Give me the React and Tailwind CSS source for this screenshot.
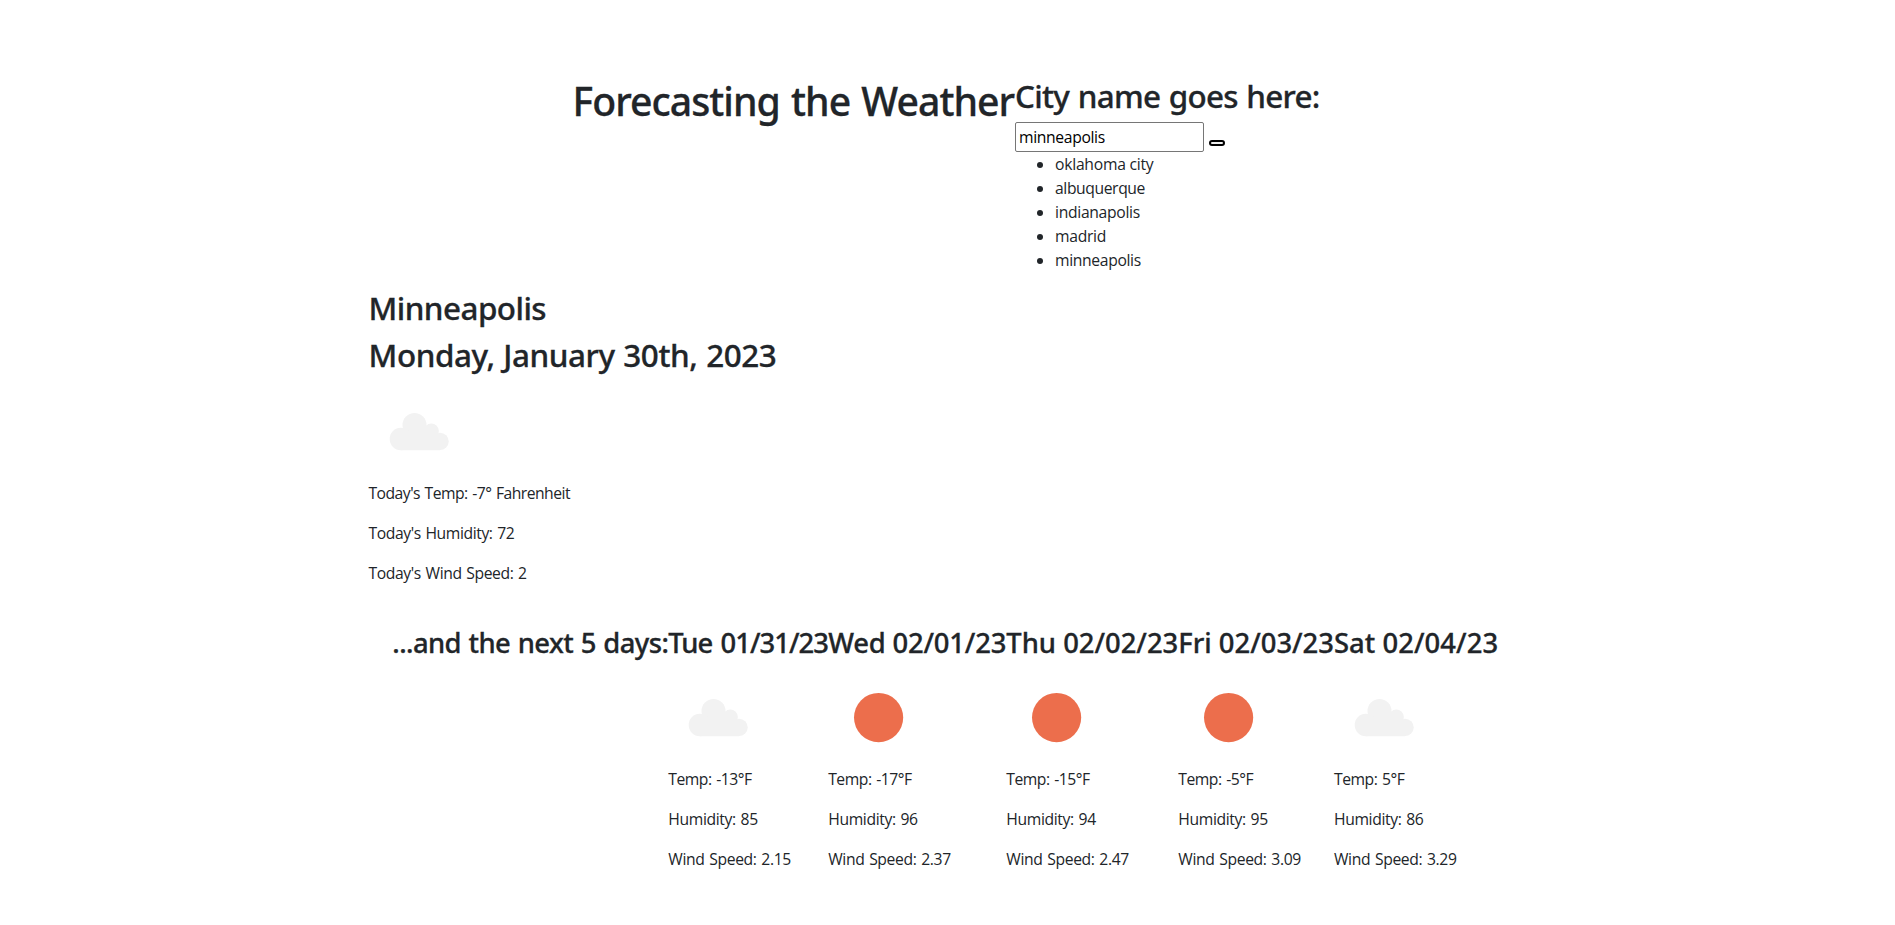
const heading = "font-['Noto_Sans',sans-serif] font-medium whitespace-nowrap [-webkit-text-stroke:0.3px_#212529]";

function Cloud() {
  return (
    <svg className="block size-[100px]" viewBox="0 0 100 100" fill="#f2f2f2">
      <circle cx="45.5" cy="44" r="12" />
      <circle cx="31.9" cy="58" r="11.2" />
      <circle cx="62.3" cy="50" r="7.6" />
      <circle cx="71" cy="60.4" r="8.7" />
      <path d="M31.9 50h30l9 10v9.2h-39z" />
    </svg>
  );
}

function Sun() {
  return (
    <svg className="block size-[100px]" viewBox="0 0 100 100">
      <circle cx="50.6" cy="50.6" r="24.6" fill="#ec6e4c" />
    </svg>
  );
}

const cities = [
  { name: "oklahoma city", className: "tracking-[-0.25px]" },
  { name: "albuquerque", className: "tracking-[-0.4px]" },
  { name: "indianapolis", className: "tracking-[-0.31px]" },
  { name: "madrid", className: "tracking-[-0.3px]" },
  { name: "minneapolis", className: "tracking-[-0.35px]" },
];

const days = [
  { date: "Tue 01/31/23", Icon: Cloud, temp: "-13", humidity: 85, wind: "2.15", width: "w-[159.9px]", tracking: "tracking-[-0.95px] [word-spacing:2px]" },
  { date: "Wed 02/01/23", Icon: Sun, temp: "-17", humidity: 96, wind: "2.37", width: "w-[178.1px]", tracking: "tracking-[-0.18px]" },
  { date: "Thu 02/02/23", Icon: Sun, temp: "-15", humidity: 94, wind: "2.47", width: "w-[172px]", tracking: "tracking-normal" },
  { date: "Fri 02/03/23", Icon: Sun, temp: "-5", humidity: 95, wind: "3.09", width: "w-[155.7px]", tracking: "tracking-normal" },
  { date: "Sat 02/04/23", Icon: Cloud, temp: "5", humidity: 86, wind: "3.29", width: "w-[164px]", tracking: "tracking-[0.06px]" },
];

export default function App() {
  return (
    <div className="min-h-[925px] bg-white pt-[76px] font-['Open_Sans',sans-serif] text-[15.7px] leading-6 text-[#212529]">
      <header className="flex pl-[572.5px]">
        <h1 className={`${heading} h-12 w-[442.5px] text-[39.2px] leading-[50px] tracking-[-0.98px] [word-spacing:2px]`}>Forecasting the Weather</h1>
        <div>
          <h2 className={`${heading} mb-2 h-[38.4px] text-[31.4px] leading-[40px] tracking-[-0.7px] [word-spacing:1px]`}>City name goes here:</h2>
          <div className="flex h-[30px] items-start gap-[5px]">
            <input
              type="text"
              defaultValue="minneapolis"
              className="h-[30px] w-[189px] rounded-[2px] border border-[#767676] bg-white px-[3px] tracking-[-0.35px] text-black outline-none"
            />
            <button aria-label="Search" className="mt-[18px] h-[6px] w-4 rounded-[3px] border-2 border-black bg-[#efefef]" />
          </div>
          <ul className="mb-4 list-disc pl-10">
            {cities.map((c) => (
              <li key={c.name} className={c.className}>{c.name}</li>
            ))}
          </ul>
        </div>
      </header>

      <section className="pl-[368.5px]">
        <h2 className={`${heading} mb-2 h-[38.4px] text-[31.4px] leading-[40px] tracking-[-0.54px]`}>Minneapolis</h2>
        <h2 className={`${heading} mb-2 h-[38.4px] text-[31.4px] leading-[40px] tracking-[-0.42px] [word-spacing:1px]`}>Monday, January 30th, 2023</h2>
        <Cloud />
        <p className="mb-4 tracking-[-0.52px] [word-spacing:1px]">Today's Temp: -7° Fahrenheit</p>
        <p className="mb-4 tracking-[-0.41px] [word-spacing:1px]">Today's Humidity: 72</p>
        <p className="mb-4 tracking-[-0.4px] [word-spacing:1px]">Today's Wind Speed: 2</p>
      </section>

      <section className="flex pt-6 pl-[392.3px]">
        <h3 className={`${heading} h-[33.6px] w-[276px] text-[27.4px] leading-[35px] tracking-[-0.58px] [word-spacing:1px]`}>...and the next 5 days:</h3>
        {days.map(({ date, Icon, temp, humidity, wind, width, tracking }) => (
          <div key={date} className={width}>
            <h3 className={`${heading} mb-2 h-[33.6px] text-[27.4px] leading-[35px] ${tracking}`}>{date}</h3>
            <Icon />
            <p className="mb-4 tracking-[-0.47px] [word-spacing:1px]">Temp: {temp}°F</p>
            <p className="mb-4 tracking-[-0.36px] [word-spacing:1px]">Humidity: {humidity}</p>
            <p className="mb-4 tracking-[-0.36px] [word-spacing:1px]">Wind Speed: {wind}</p>
          </div>
        ))}
      </section>
    </div>
  );
}
